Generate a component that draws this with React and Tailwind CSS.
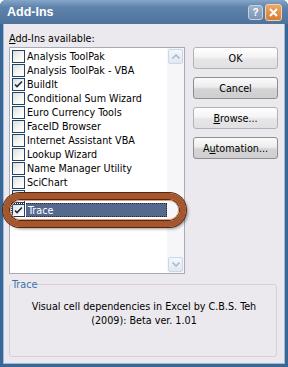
import React from "react";

function Check() {
  return (
    <svg width="9" height="9" viewBox="0 0 9 9" className="block">
      <polyline points="1,4.5 3,6.5 8,1.5" fill="none" stroke="#1b2a44" strokeWidth="1.6" />
    </svg>
  );
}

function Box({ checked }) {
  return (
    <div className="w-[13px] h-[13px] shrink-0 border border-[#23436b] bg-[linear-gradient(135deg,#dcdcd6,#f8f8f6_60%,#ffffff)] flex items-center justify-center">
      {checked && <Check />}
    </div>
  );
}

const items = [
  ["Analysis ToolPak", false],
  ["Analysis ToolPak - VBA", false],
  ["BuildIt", true],
  ["Conditional Sum Wizard", false],
  ["Euro Currency Tools", false],
  ["FaceID Browser", false],
  ["Internet Assistant VBA", false],
  ["Lookup Wizard", false],
  ["Name Manager Utility", false],
  ["SciChart", false],
  ["Solver Add-in", true],
];

function Btn({ children, dark }) {
  return (
    <div
      className={
        "h-[22px] w-[85px] rounded-[3px] border flex items-center justify-center text-black " +
        (dark
          ? "border-[#8e8e90] bg-[linear-gradient(#fbfbfb,#ececec_45%,#d4d4d6_55%,#cfcfd1)]"
          : "border-[#b3b3b5] bg-[linear-gradient(#ffffff,#f4f4f4_45%,#e6e6e8_55%,#e1e1e3)]")
      }
    >
      {children}
    </div>
  );
}

export default function App() {
  return (
    <div className="relative w-[288px] h-[367px] flex flex-col bg-[#3a6795] rounded-t-[6px] overflow-hidden font-['DejaVu_Sans_Condensed','Liberation_Sans',sans-serif] text-[10.7px] leading-[13px] text-black">
      {/* Title bar */}
      <div className="h-[24px] shrink-0 flex items-center bg-[linear-gradient(#86a6ca,#5f83ab_30%,#5479a2_70%,#4f739b)] pl-[7px] pr-[6px]">
        <span className="font-['Liberation_Sans',sans-serif] font-bold text-[12.5px] text-white">Add-Ins</span>
        <div className="ml-auto flex items-center gap-[2px]">
          <div className="w-[15px] h-[15px] rounded-[3px] border border-[#c2d0e0] bg-[linear-gradient(#9db2ca,#7d96b4)] flex items-center justify-center text-white font-bold text-[10px] font-['Liberation_Sans',sans-serif]">?</div>
          <div className="w-[17px] h-[17px] rounded-[3px] border border-[#f3d2b0] bg-[linear-gradient(#eba866,#d77d35)] flex items-center justify-center">
            <svg width="9" height="9" viewBox="0 0 9 9">
              <path d="M1 1L8 8M8 1L1 8" stroke="#fff" strokeWidth="2" />
            </svg>
          </div>
        </div>
      </div>

      {/* Body */}
      <div className="flex-1 mx-[3px] mb-[3px] border border-t-0 border-[#9dbbdc] bg-[#ebe9ed] flex flex-col pt-[8px] pl-[5px] pr-[6px]">
        <div className="h-[13px]">
          <span className="underline">A</span>dd-Ins available:
        </div>
        <div className="mt-[2px] flex">
          {/* List box */}
          <div className="w-[176px] h-[227px] border border-[#a3acb8] bg-white flex">
            <div className="flex-1 flex flex-col pt-[1px] pl-[2px]">
              {items.map(([name, c]) => (
                <div key={name} className="h-[14px] flex items-center">
                  <Box checked={c} />
                  <span className="ml-[2px] whitespace-nowrap">{name}</span>
                </div>
              ))}
              <div className="relative h-[14px] flex items-center">
                <Box checked />
                <div className="ml-[1px] flex-1 h-full bg-[#55698f] text-white pl-[2px] flex items-center">Trace</div>
                <div className="absolute -left-[1px] right-0 top-0 bottom-0 border border-dotted border-[#2a2a2a]"></div>
              </div>
            </div>
            <div className="w-[17px] bg-[#f6f6f8] flex flex-col justify-between items-center py-[1px]">
              <div className="w-[15px] h-[15px] rounded-[2px] border border-[#cdd6e3] bg-[linear-gradient(#f4f7fb,#e1e8f2)] flex items-center justify-center">
                <svg width="8" height="5" viewBox="0 0 8 5"><path d="M0.5 4.5L4 1L7.5 4.5" fill="none" stroke="#a7bcd8" strokeWidth="1.6" /></svg>
              </div>
              <div className="w-[15px] h-[15px] rounded-[2px] border border-[#cdd6e3] bg-[linear-gradient(#f4f7fb,#e1e8f2)] flex items-center justify-center">
                <svg width="8" height="5" viewBox="0 0 8 5"><path d="M0.5 0.5L4 4L7.5 0.5" fill="none" stroke="#a7bcd8" strokeWidth="1.6" /></svg>
              </div>
            </div>
          </div>
          {/* Buttons */}
          <div className="ml-[8px] flex flex-col gap-[8px]">
            <Btn>OK</Btn>
            <Btn dark>Cancel</Btn>
            <Btn><span><span className="underline">B</span>rowse...</span></Btn>
            <Btn dark><span>A<span className="underline">u</span>tomation...</span></Btn>
          </div>
        </div>
        {/* Group box */}
        <fieldset className="mt-[4px] w-[268px] h-[79px] border border-[#d3d1d6] rounded-[3px] pl-[2px]">
          <legend className="text-[#3a70ad] px-0 leading-[13px]">Trace</legend>
          <div className="pt-[9px] text-center leading-[14px]">
            Visual cell dependencies in Excel by C.B.S. Teh<br />(2009): Beta ver. 1.01
          </div>
        </fieldset>
      </div>

      {/* Highlight oval annotation */}
      <div className="absolute left-[3px] top-[193px] w-[183px] h-[34px] rounded-full border-[6px] border-[#a4562c] shadow-[0_0_0_1px_#5c2310,inset_0_0_0_1px_#5c2310,2px_2px_3px_rgba(0,0,0,0.4)]">
        <div className="absolute inset-[1px] rounded-full border border-[#d8a080]"></div>
      </div>
    </div>
  );
}
